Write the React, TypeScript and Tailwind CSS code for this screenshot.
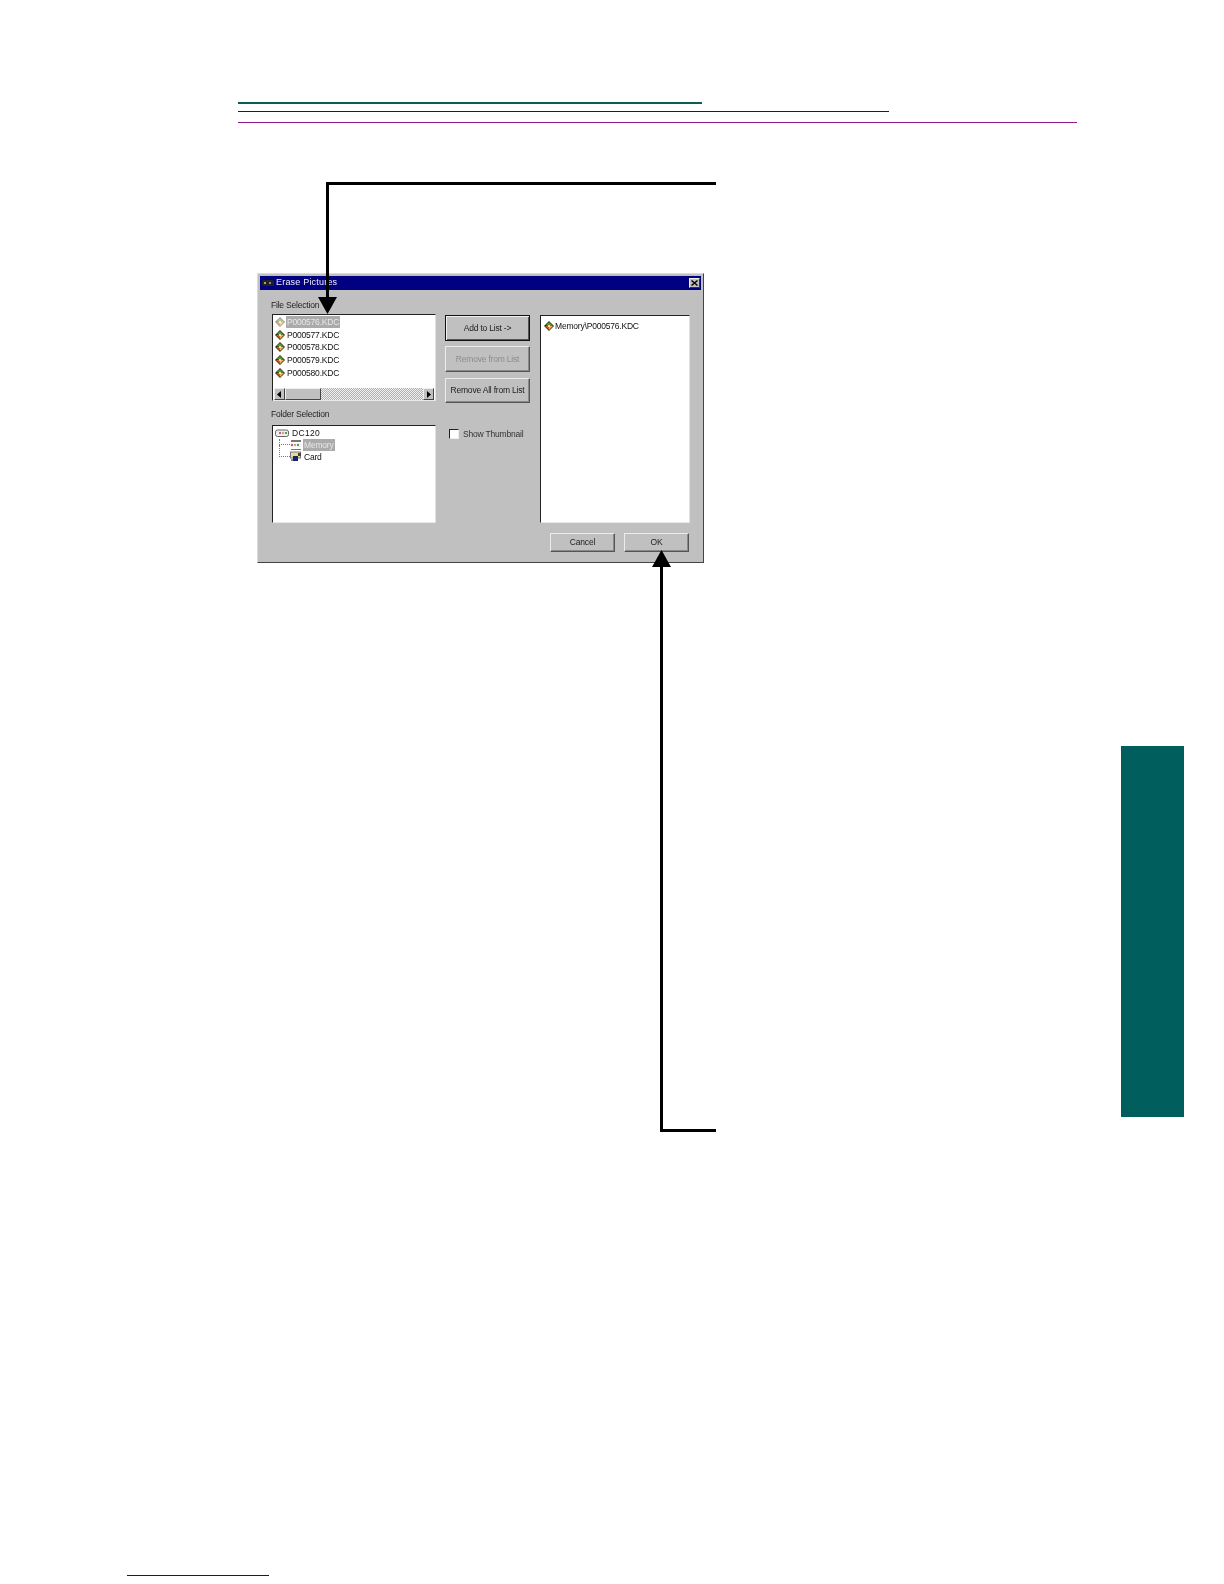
const FONT = "font-['Liberation_Sans',Arial,sans-serif]";

function Diamond({ faded = false }: { faded?: boolean }) {
  return (
    <svg width="10" height="10" viewBox="0 0 11 11" className={"shrink-0" + (faded ? " opacity-50" : "")}>
      <polygon points="5.5,0 11,5.5 5.5,11 0,5.5" fill="#3a2a1a" />
      <polygon points="5.5,1 9.8,5.3 5.5,5.5 2,4.5" fill="#4f9a2a" />
      <polygon points="1.2,5.5 5.5,5.5 5.5,9.8" fill="#e0521b" />
      <polygon points="5.5,5.5 9.8,5.5 5.5,9.8" fill="#e8b83a" />
      <rect x="4.5" y="4.5" width="2" height="2" fill="#f8f2d8" />
    </svg>
  );
}

function FileRow({ name, selected = false }: { name: string; selected?: boolean }) {
  return (
    <div className="flex items-center h-[12.6px] pl-[2px] gap-[1px]">
      <Diamond faded={selected} />
      <span className={"px-[1px] leading-[12px] h-[12px] " + (selected ? "bg-[#ababab] text-[#e8e8e8]" : "text-[#111]")}>
        {name}
      </span>
    </div>
  );
}

function Sunken({ className, children }: { className: string; children?: React.ReactNode }) {
  return (
    <div className={"bg-white border border-t-[#222] border-l-[#222] border-r-[#dfdfdf] border-b-[#e8e8e8] overflow-hidden " + className}>
      {children}
    </div>
  );
}

function WinButton({ label, className, disabled = false, isDefault = false }: { label: string; className: string; disabled?: boolean; isDefault?: boolean }) {
  return (
    <div
      className={
        "flex items-center justify-center border whitespace-nowrap " +
        (isDefault
          ? "border-[#111] shadow-[inset_1px_1px_0_#efefef,inset_-1px_-1px_0_#555] "
          : "border-t-[#ececec] border-l-[#ececec] border-r-[#555] border-b-[#555] shadow-[inset_-1px_-1px_0_#8a8a8a] ") +
        (disabled ? "text-[#8c8c8c] " : "text-[#222] ") +
        className
      }
    >
      {label}
    </div>
  );
}

function ScrollArrow({ dir }: { dir: "l" | "r" }) {
  return (
    <div className="w-[11px] h-full bg-[#c0c0c0] border border-t-[#eee] border-l-[#eee] border-r-[#444] border-b-[#444] flex items-center justify-center shrink-0">
      <svg width="5" height="7" viewBox="0 0 5 7">
        <polygon points={dir === "l" ? "4,0 4,7 0,3.5" : "1,0 1,7 5,3.5"} fill="#000" />
      </svg>
    </div>
  );
}

function TreeIcon({ kind }: { kind: "camera" | "memory" | "card" }) {
  if (kind === "camera")
    return (
      <svg width="14" height="10" viewBox="0 0 14 10" className="shrink-0">
        <rect x="0.5" y="2" width="13" height="6.5" rx="2" fill="#eee" stroke="#666" />
        <rect x="4" y="4" width="2" height="2" fill="#b45ab4" />
        <rect x="7" y="4" width="2" height="2" fill="#c9b53c" />
        <rect x="10" y="4" width="2" height="2" fill="#5a9a5a" />
      </svg>
    );
  if (kind === "memory")
    return (
      <svg width="12" height="12" viewBox="0 0 12 12" className="shrink-0">
        <rect x="1" y="1" width="10" height="2" fill="#777" />
        <rect x="0.5" y="4" width="11" height="4" fill="#f2f2f2" />
        <rect x="1" y="5" width="2" height="2" fill="#b45ab4" />
        <rect x="4" y="5" width="2" height="2" fill="#c9b53c" />
        <rect x="7" y="5" width="2" height="2" fill="#5a9a5a" />
        <rect x="1" y="10" width="10" height="1" fill="#777" />
      </svg>
    );
  return (
    <svg width="12" height="12" viewBox="0 0 12 12" className="shrink-0">
      <rect x="0.5" y="1" width="10" height="6" fill="#e6dc9a" stroke="#777" />
      <rect x="3" y="5" width="5" height="5" fill="#16246b" />
      <rect x="8" y="2" width="3" height="3" fill="#444" />
      <rect x="1" y="8" width="2" height="2" fill="#8a8a8a" />
    </svg>
  );
}

function Dialog() {
  return (
    <div className={"w-[447px] h-[290px] bg-[#c0c0c0] border border-t-[#dcdcdc] border-l-[#dcdcdc] border-r-[#444] border-b-[#444] p-[2px] text-[8.5px] tracking-[-0.2px] flex flex-col blur-[0.3px] " + FONT}>
      <div className="h-[14px] bg-[#000080] flex items-center pl-[2px] pr-[1px] shrink-0">
        <svg width="12" height="8" viewBox="0 0 12 8" className="shrink-0">
          <rect x="0" y="1" width="12" height="6" rx="2" fill="#222" />
          <rect x="2" y="3" width="2" height="2" fill="#b9a53c" />
          <rect x="7" y="3" width="2" height="2" fill="#888" />
        </svg>
        <span className="ml-[2px] text-[#eef] text-[9px] tracking-[0.2px]">Erase Pictures</span>
        <div className="ml-auto w-[11px] h-[10px] bg-[#c0c0c0] border border-t-[#eee] border-l-[#eee] border-r-[#333] border-b-[#333] flex items-center justify-center">
          <svg width="7" height="6" viewBox="0 0 7 6">
            <path d="M0.5 0.5 L6.5 5.5 M6.5 0.5 L0.5 5.5" stroke="#000" strokeWidth="1.4" />
          </svg>
        </div>
      </div>

      <div className="flex pl-[12px] pr-[11px]">
        <div className="w-[164px] pt-[10px]">
          <div className="h-[10px] leading-[10px] text-[#222] -ml-[1px] mb-[4px]">File Selection</div>
          <Sunken className="h-[87px] pt-[1px] flex flex-col">
            <div className="flex-1">
              <FileRow name="P000576.KDC" selected />
              <FileRow name="P000577.KDC" />
              <FileRow name="P000578.KDC" />
              <FileRow name="P000579.KDC" />
              <FileRow name="P000580.KDC" />
            </div>
            <div className="h-[12px] mx-[1px] flex bg-[repeating-conic-gradient(#b0b0b0_0%_25%,#efefef_0%_50%)] bg-[length:2px_2px]">
              <ScrollArrow dir="l" />
              <div className="w-[36px] h-full bg-[#c0c0c0] border border-t-[#eee] border-l-[#eee] border-r-[#444] border-b-[#444]" />
              <div className="flex-1" />
              <ScrollArrow dir="r" />
            </div>
          </Sunken>
          <div className="mt-[8px] h-[10px] leading-[10px] text-[#222] -ml-[1px] mb-[6px]">Folder Selection</div>
          <Sunken className="h-[98px] pt-[1px]">
            <div className="flex items-center h-[12px] pl-[2px] gap-[3px] text-[#111] tracking-[0.3px]">
              <TreeIcon kind="camera" />
              <span className="leading-[12px]">DC120</span>
            </div>
            <div className="flex items-center h-[12px] pl-[6px]">
              <div className="w-[11px] h-[6px] mb-[6px] border-l border-b border-dotted border-[#777] shrink-0" />
              <TreeIcon kind="memory" />
              <span className="ml-[1px] bg-[#ababab] text-[#e8e8e8] leading-[12px] px-[1px]">Memory</span>
            </div>
            <div className="flex items-center h-[12px] pl-[6px]">
              <div className="w-[11px] h-[12px] mb-[12px] border-l border-b border-dotted border-[#777] shrink-0" />
              <TreeIcon kind="card" />
              <span className="ml-[2px] text-[#111] leading-[12px]">Card</span>
            </div>
          </Sunken>
        </div>

        <div className="w-[85px] ml-[9px] pt-[25px] flex flex-col">
          <WinButton label="Add to List ->" isDefault className="h-[26px] pt-[1px]" />
          <WinButton label="Remove from List" disabled className="h-[26px] mt-[5px] pt-[1px]" />
          <WinButton label="Remove All from List" className="h-[25px] mt-[6px]" />
          <div className="flex items-center mt-[26px] ml-[4px] gap-[4px]">
            <div className="w-[10px] h-[10px] bg-white border border-t-[#222] border-l-[#222] border-r-[#eee] border-b-[#eee] shrink-0" />
            <span className="text-[#333] whitespace-nowrap leading-[10px]">Show Thumbnail</span>
          </div>
        </div>

        <div className="w-[150px] ml-[10px] pt-[25px]">
          <Sunken className="h-[208px] pt-[4px]">
            <div className="flex items-center h-[12px] pl-[3px] gap-[1px]">
              <Diamond />
              <span className="text-[#111] leading-[12px] whitespace-nowrap">Memory\P000576.KDC</span>
            </div>
          </Sunken>
        </div>
      </div>

      <div className="flex justify-end gap-[9px] mt-[10px] pr-[12px]">
        <WinButton label="Cancel" className="w-[65px] h-[19px]" />
        <WinButton label="OK" className="w-[65px] h-[19px]" />
      </div>
    </div>
  );
}

export default function App() {
  return (
    <div className="relative w-[1224px] h-[1584px] bg-white overflow-hidden flex">
      <div className="w-[1121px] shrink-0 flex flex-col">
        <div className="pt-[102px] pl-[238px] flex flex-col items-start">
          <div className="w-[464px] h-[2px] bg-[#0b5c58]" />
          <div className="w-[651px] h-[1px] bg-[#10108c] mt-[7px]" />
          <div className="w-[839px] h-[1px] bg-[#8c1a8c] mt-[10px]" />
        </div>
        <div className="ml-[257px] mt-[150px]">
          <Dialog />
        </div>
        <div className="ml-[127px] mt-[1012px] w-[142px] h-[1px] bg-[#10108c]" />
      </div>
      <div className="w-[63px] h-[371px] mt-[746px] bg-[#005f5c] shrink-0" />

      <svg className="absolute inset-0 pointer-events-none" width="1224" height="1584" viewBox="0 0 1224 1584">
        <path d="M716 183.5 H327.5 V300" fill="none" stroke="#000" strokeWidth="3" />
        <polygon points="318,297 337,297 327.5,314" fill="#000" />
        <path d="M716 1130.5 H661.5 V560" fill="none" stroke="#000" strokeWidth="3" />
        <polygon points="652,567 671,567 661.5,550" fill="#000" />
      </svg>
    </div>
  );
}
